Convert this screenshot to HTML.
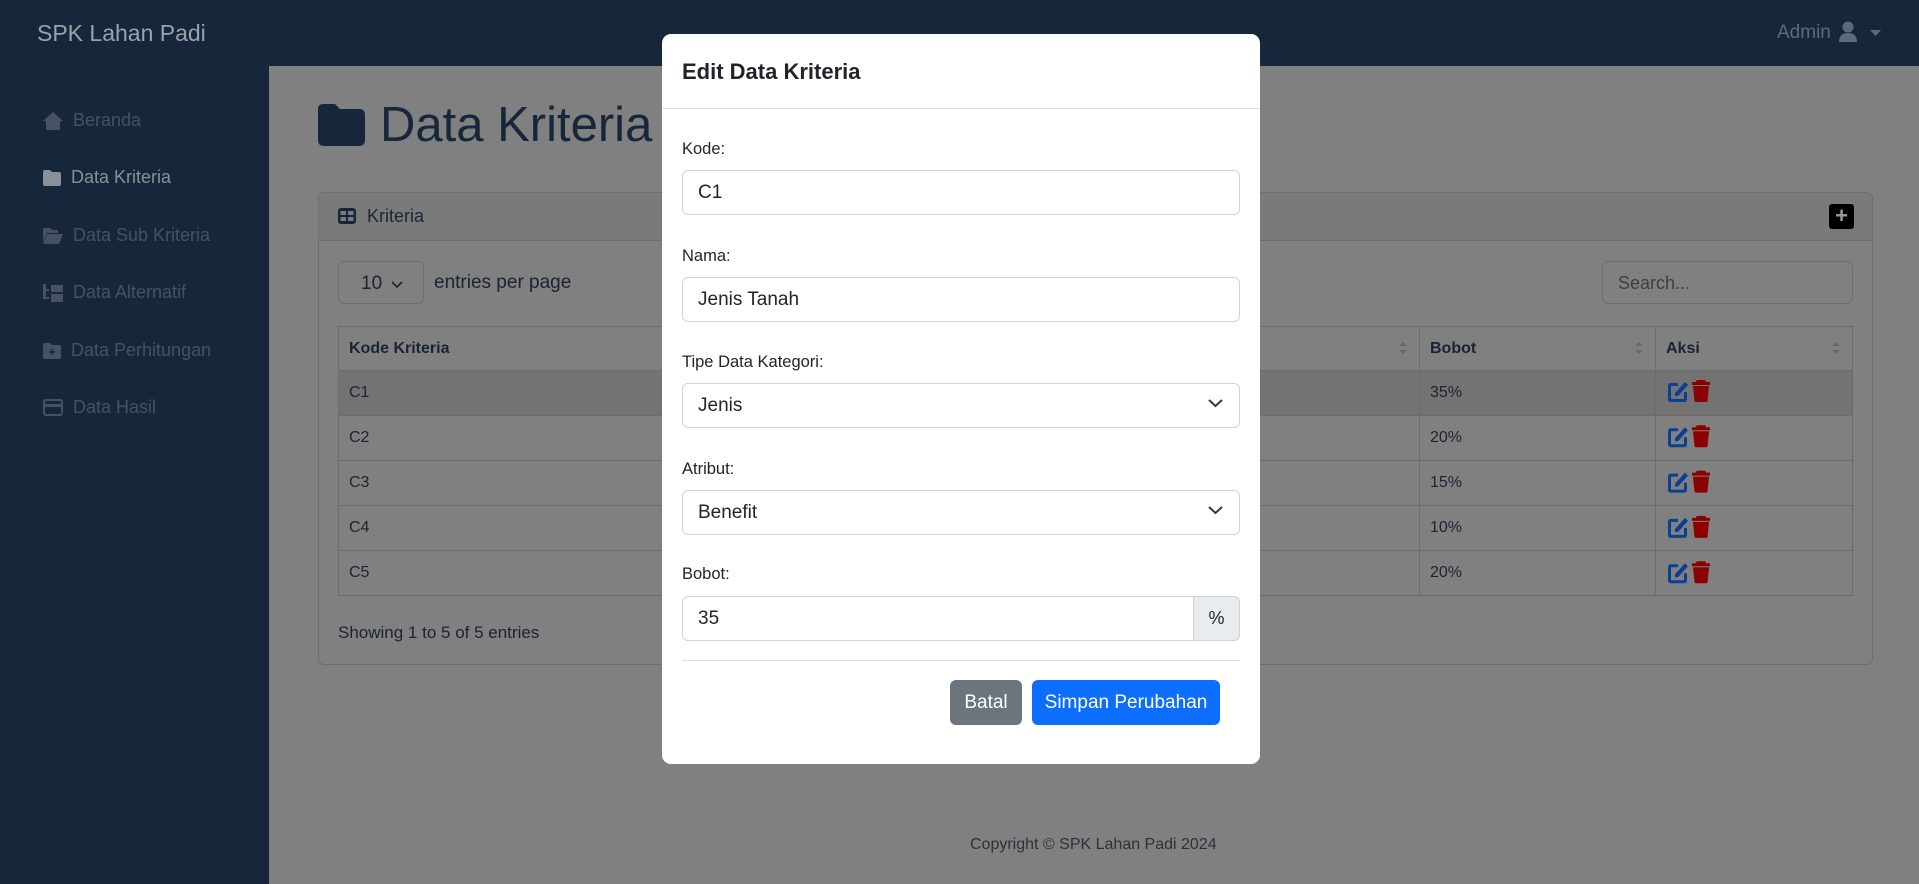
<!DOCTYPE html>
<html><head><meta charset="utf-8"><style>
*{box-sizing:border-box;margin:0;padding:0}
body{width:1919px;height:884px;overflow:hidden;background:#808080;font-family:"Liberation Sans",sans-serif;position:relative}
.a{position:absolute}
.nav{left:0;top:0;width:1919px;height:66px;background:#17273b}
.side{left:0;top:66px;width:269px;height:818px;background:#17273b}
.si{left:43px;font-size:18px;color:#465262;display:flex;align-items:center;gap:10px}
.card{left:318px;top:192px;width:1555px;height:473px;border:1px solid #6e6e6e;border-radius:6px}
.ch{left:0;top:0;width:100%;height:48px;border-bottom:1px solid #6e6e6e;background:#7a7a7a;border-radius:6px 6px 0 0}
table{border-collapse:collapse;position:absolute;left:338px;top:326px;width:1515px;font-size:16px;color:#1b2330}
td,th{border:1px solid #6c6c6c;padding:0 10px;height:45px;text-align:left;position:relative}
th{height:44px}
th .s{position:absolute;right:12px;top:14px}
.modal{left:662px;top:34px;width:598px;height:730px;background:#fff;border-radius:9px}
.lbl{left:20px;font-size:16.5px;color:#212529}
.inp{left:20px;width:558px;height:45px;border:1px solid #ced4da;border-radius:6px;font-size:19px;color:#212529;padding-left:15px;line-height:43px}
.chev{position:absolute;right:16px;top:14px}
</style></head><body>
<div class="a nav"></div>
<div class="a" style="left:37px;top:20px;font-size:23px;color:#9aa2ad">SPK Lahan Padi</div>
<div class="a" style="left:1777px;top:22px;font-size:19px;color:#5d6a7a">Admin</div>
<svg class="a" style="left:1839px;top:21px" width="18" height="22" viewBox="0 0 18 22"><circle cx="9" cy="6" r="5.5" fill="#5d6a7a"/><path d="M0 21 Q0 12 9 12 Q18 12 18 21Z" fill="#5d6a7a"/></svg>
<svg class="a" style="left:1870px;top:30px" width="11" height="6"><path d="M0 0H11L5.5 6Z" fill="#5d6a7a"/></svg>
<div class="a side"></div>
<div class="a si" style="top:110px"><svg width="20" height="18" viewBox="0 0 20 18"><path d="M10 0L20 9H17V18H3V9H0Z" fill="#465262"/></svg>Beranda</div>
<div class="a si" style="top:167px;color:#8a9098"><svg width="18" height="16"><path d="M0 2Q0 0 2 0H7L9 2H16Q18 2 18 4V14Q18 16 16 16H2Q0 16 0 14Z" fill="#8a9098"/></svg>Data Kriteria</div>
<div class="a si" style="top:225px"><svg width="20" height="16"><path d="M0 2Q0 0 2 0H7L9 2H15V5H4L0 14Z M4 6H20L16 16H0Z" fill="#465262"/></svg>Data Sub Kriteria</div>
<div class="a si" style="top:282px"><svg width="20" height="18"><path d="M0 0H3V5H6V7H3V13H6V15H0Z M8 1H20V8H8Z M8 10H20V18H8Z" fill="#465262"/></svg>Data Alternatif</div>
<div class="a si" style="top:340px"><svg width="18" height="16"><path d="M0 2Q0 0 2 0H7L9 2H16Q18 2 18 4V14Q18 16 16 16H2Q0 16 0 14Z" fill="#465262"/><path d="M9 6V12M6 9H12" stroke="#17273b" stroke-width="1.5"/></svg>Data Perhitungan</div>
<div class="a si" style="top:397px"><svg width="20" height="17"><rect x="1" y="1" width="18" height="15" rx="2" fill="none" stroke="#465262" stroke-width="2"/><rect x="1" y="5" width="18" height="3" fill="#465262"/></svg>Data Hasil</div>

<svg class="a" style="left:318px;top:104px" width="47" height="42" viewBox="0 0 47 42"><path d="M0 5Q0 0 5 0H17L22 5H41Q47 5 47 11V36Q47 42 41 42H6Q0 42 0 36Z" fill="#17273b"/></svg>
<div class="a" style="left:380px;top:97px;font-size:49px;color:#17273b">Data Kriteria</div>

<div class="a card"><div class="a ch"></div></div>
<svg class="a" style="left:338px;top:208px" width="18" height="16"><rect width="18" height="16" rx="3" fill="#17273b"/><rect x="2.5" y="3" width="5.5" height="4" fill="#7a7a7a"/><rect x="10" y="3" width="5.5" height="4" fill="#7a7a7a"/><rect x="2.5" y="9" width="5.5" height="4" fill="#7a7a7a"/><rect x="10" y="9" width="5.5" height="4" fill="#7a7a7a"/></svg>
<div class="a" style="left:367px;top:206px;font-size:18px;color:#17273b">Kriteria</div>
<div class="a" style="left:1829px;top:204px;width:25px;height:25px;background:#000;border-radius:3px;color:#999;font-size:22px;line-height:24px;text-align:center;font-weight:bold">+</div>
<div class="a" style="left:338px;top:261px;width:86px;height:43px;border:1px solid #6e6e6e;border-radius:6px;font-size:19px;color:#1b2330;padding:11px 0 0 22px">10 <svg width="12" height="8" style="margin-left:4px"><path d="M1 1L6 6L11 1" stroke="#1b2330" stroke-width="1.6" fill="none"/></svg></div>
<div class="a" style="left:434px;top:272px;font-size:19px;color:#1b2330">entries per page</div>
<div class="a" style="left:1602px;top:261px;width:251px;height:43px;border:1px solid #6e6e6e;border-radius:6px;font-size:18px;color:#3a3f46;padding:11px 0 0 15px">Search...</div>
<table>
<tr><th style="width:400px">Kode Kriteria</th><th style="width:400px"></th><th style="width:281px"><svg class="s" width="8" height="14"><path d="M0 5L4 1L8 5Z M0 9L4 13L8 9Z" fill="#686868"/></svg></th><th style="width:236px">Bobot<svg class="s" width="8" height="14"><path d="M0 5L4 1L8 5Z M0 9L4 13L8 9Z" fill="#686868"/></svg></th><th>Aksi<svg class="s" width="8" height="14"><path d="M0 5L4 1L8 5Z M0 9L4 13L8 9Z" fill="#686868"/></svg></th></tr>
<tr style="background:#737373"><td>C1</td><td></td><td></td><td>35%</td><td></td></tr>
<tr><td>C2</td><td></td><td></td><td>20%</td><td></td></tr>
<tr><td>C3</td><td></td><td></td><td>15%</td><td></td></tr>
<tr><td>C4</td><td></td><td></td><td>10%</td><td></td></tr>
<tr><td>C5</td><td></td><td></td><td>20%</td><td></td></tr>
</table>
<svg class="a" style="left:1666px;top:378px" width="52" height="215"><g id="ic"><path d="M2 8Q2 5 5 5H12V8H5V21H18V14H21V21Q21 24 18 24H5Q2 24 2 21Z" fill="#0a3f94"/><path d="M9 15L19 4L22 7L12 18H9Z" fill="#0a3f94"/><path d="M30 4Q30 2 32 2H38Q40 2 40 4H44V7H26V4Z M27 8H43L41.5 23Q41.3 24 40 24H30Q28.7 24 28.5 23Z" fill="#8b0000"/></g><use href="#ic" y="45.3"/><use href="#ic" y="90.6"/><use href="#ic" y="135.9"/><use href="#ic" y="181.2"/></svg>
<div class="a" style="left:338px;top:623px;font-size:17px;color:#1b2330">Showing 1 to 5 of 5 entries</div>
<div class="a" style="left:970px;top:836px;font-size:16px;color:#2a313a">Copyright © SPK Lahan Padi 2024</div>

<div class="a modal">
<div class="a" style="left:20px;top:25px;font-size:22px;color:#212529;font-weight:bold">Edit Data Kriteria</div>
<div class="a" style="left:0;top:74px;width:598px;border-top:1px solid #dee2e6"></div>
<div class="a lbl" style="top:106px">Kode:</div>
<div class="a inp" style="top:136px">C1</div>
<div class="a lbl" style="top:213px">Nama:</div>
<div class="a inp" style="top:243px">Jenis Tanah</div>
<div class="a lbl" style="top:319px">Tipe Data Kategori:</div>
<div class="a inp" style="top:349px">Jenis<svg class="chev" width="15" height="10"><path d="M1 2L7.5 8L14 2" stroke="#343a40" stroke-width="2" fill="none"/></svg></div>
<div class="a lbl" style="top:426px">Atribut:</div>
<div class="a inp" style="top:456px">Benefit<svg class="chev" width="15" height="10"><path d="M1 2L7.5 8L14 2" stroke="#343a40" stroke-width="2" fill="none"/></svg></div>
<div class="a lbl" style="top:531px">Bobot:</div>
<div class="a inp" style="top:562px">35</div>
<div class="a" style="left:531px;top:562px;width:47px;height:45px;background:#e9ecef;border:1px solid #ced4da;border-radius:0 6px 6px 0;font-size:18px;color:#212529;text-align:center;line-height:43px">%</div>
<div class="a" style="left:20px;top:626px;width:558px;border-top:1px solid #dee2e6"></div>
<div class="a" style="left:288px;top:646px;width:72px;height:45px;background:#6c757d;border-radius:6px;color:#fff;font-size:19px;text-align:center;line-height:45px">Batal</div>
<div class="a" style="left:370px;top:646px;width:188px;height:45px;background:#0d6efd;border-radius:6px;color:#fff;font-size:19px;text-align:center;line-height:45px">Simpan Perubahan</div>
</div>
</body></html>
